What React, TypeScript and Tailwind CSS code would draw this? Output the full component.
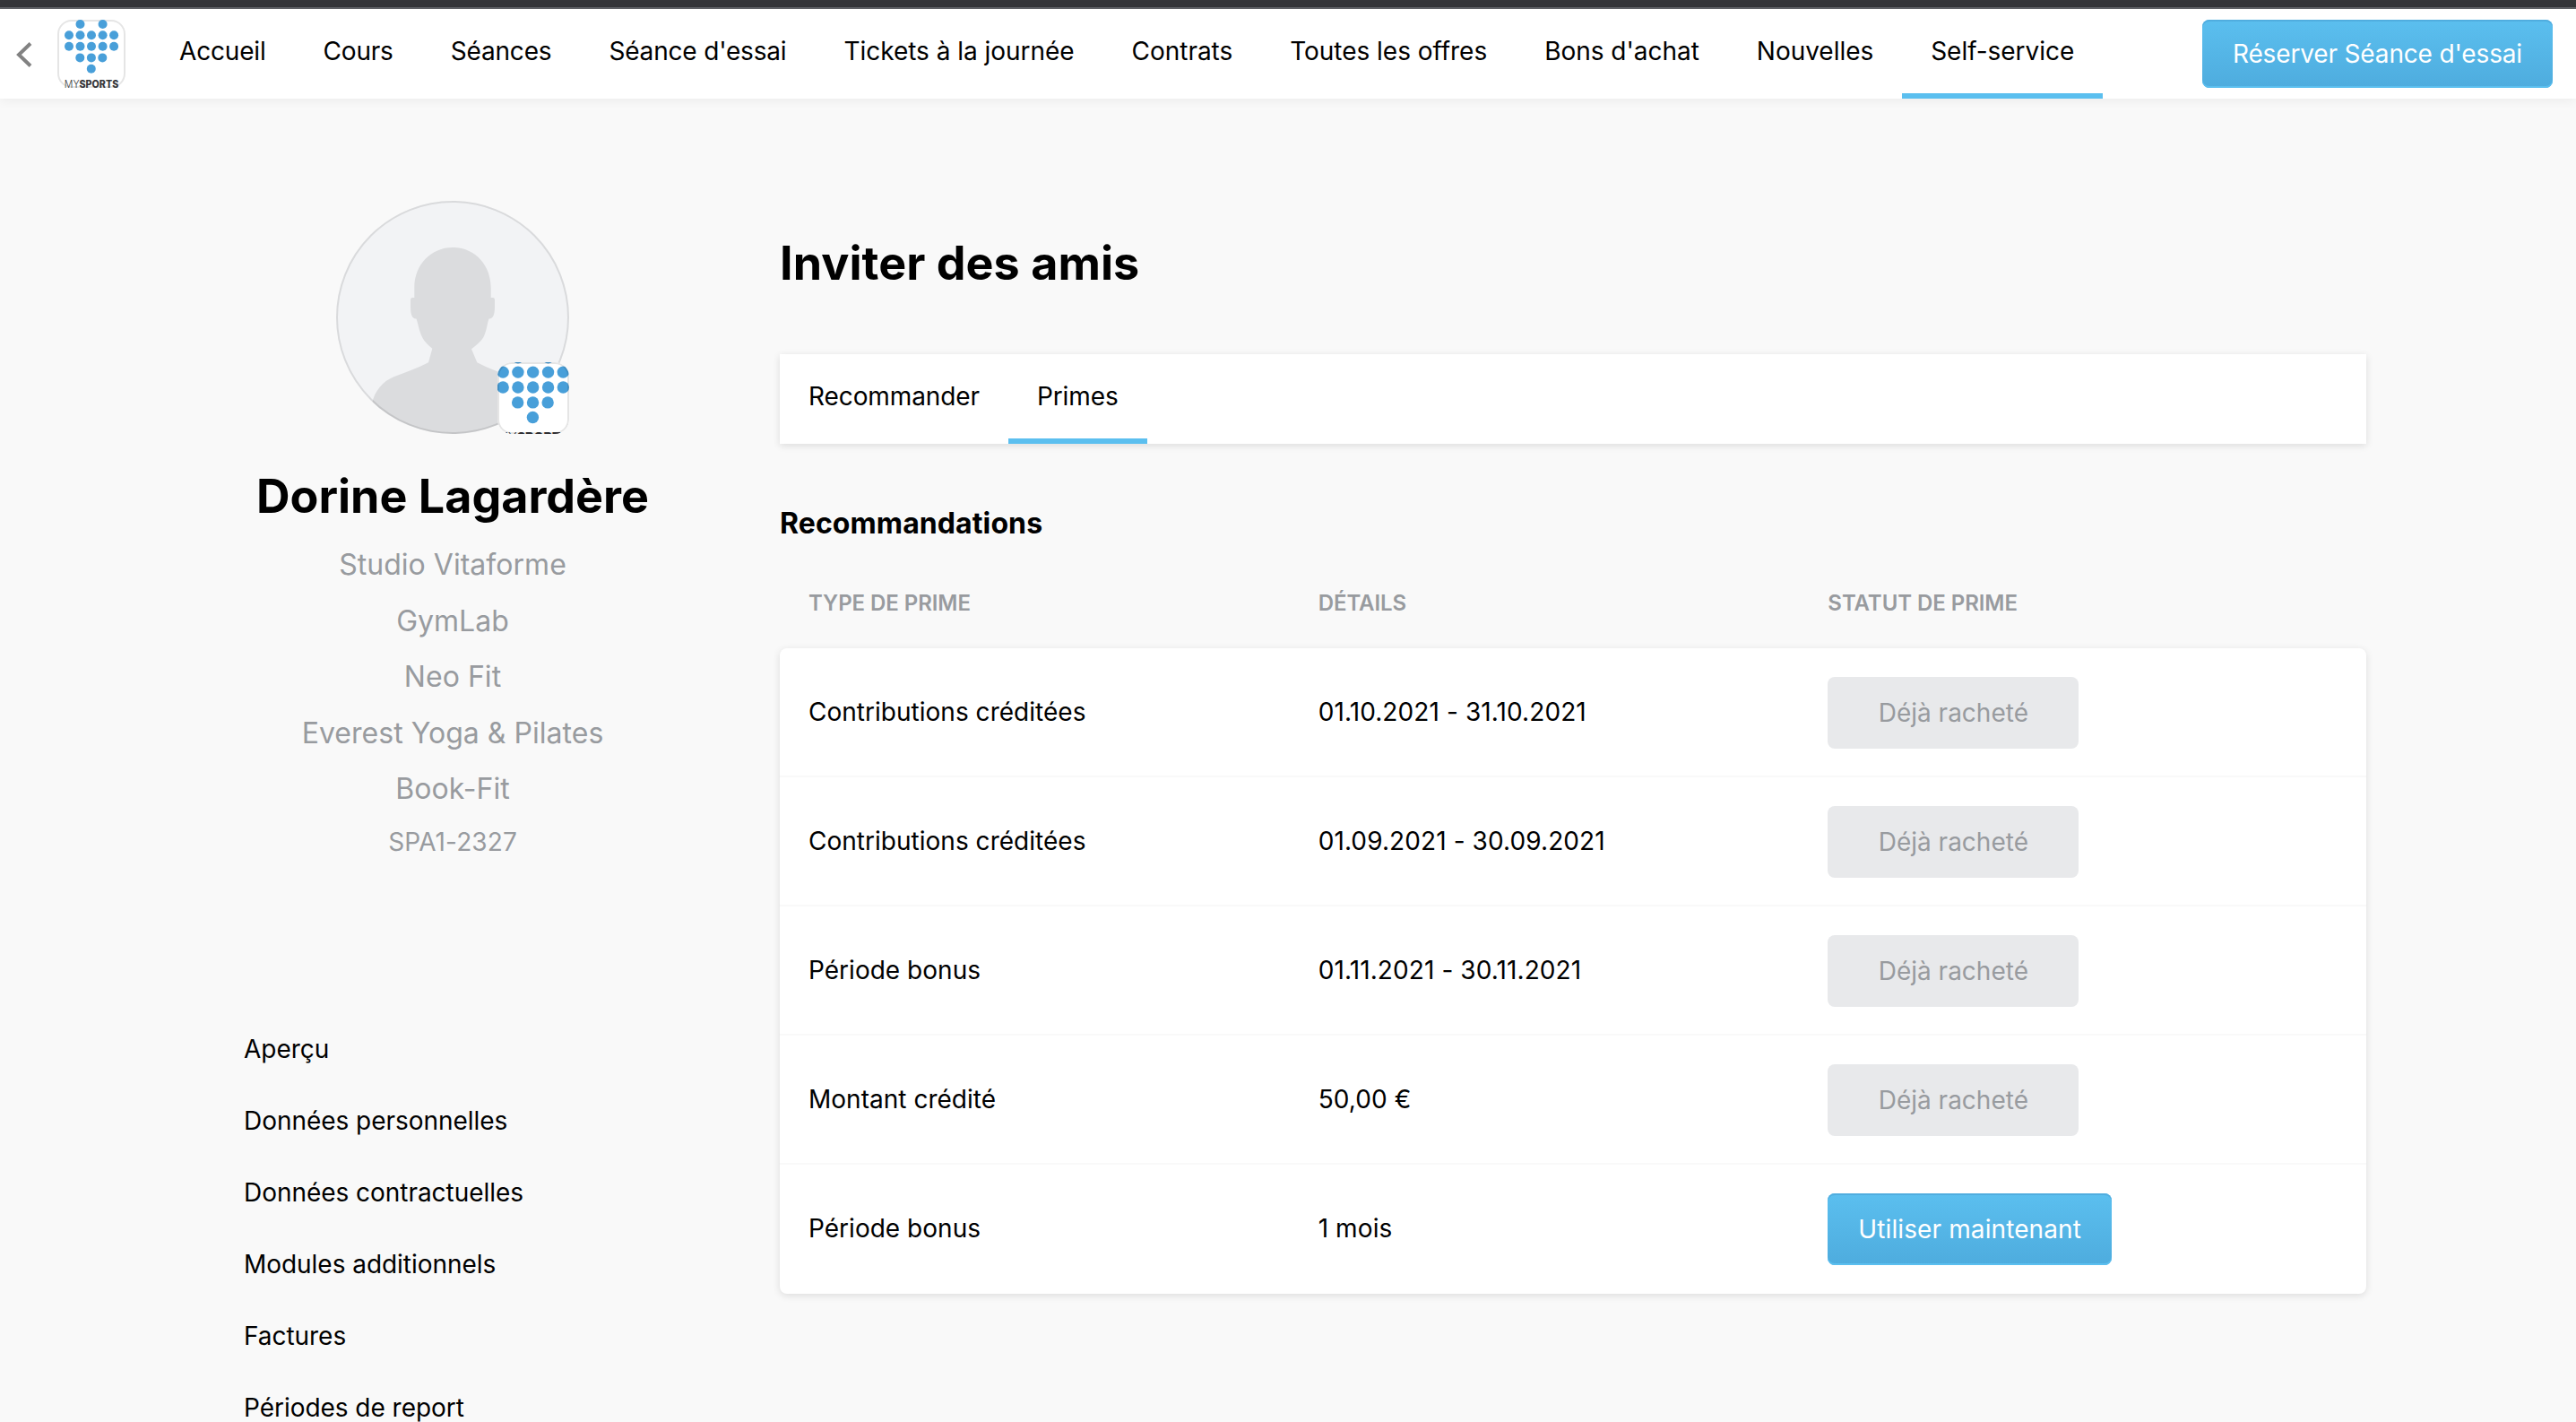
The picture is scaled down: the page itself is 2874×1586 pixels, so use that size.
const navItems = [
    "Accueil",
    "Cours",
    "Séances",
    "Séance d'essai",
    "Tickets à la journée",
    "Contrats",
    "Toutes les offres",
    "Bons d'achat",
    "Nouvelles",
    "Self-service",
];

const studios = ["Studio Vitaforme", "GymLab", "Neo Fit", "Everest Yoga & Pilates", "Book-Fit"];

const menuItems = [
    "Aperçu",
    "Données personnelles",
    "Données contractuelles",
    "Modules additionnels",
    "Factures",
    "Périodes de report",
];

const rewards = [
    { type: "Contributions créditées", details: "01.10.2021 - 31.10.2021", redeemed: true },
    { type: "Contributions créditées", details: "01.09.2021 - 30.09.2021", redeemed: true },
    { type: "Période bonus", details: "01.11.2021 - 30.11.2021", redeemed: true },
    { type: "Montant crédité", details: "50,00 €", redeemed: true },
    { type: "Période bonus", details: "1 mois", redeemed: false },
];

// columns of the dot heart, row by row
const dotRows = [
    { y: 5, cols: [25.5, 50.6] },
    { y: 17.2, cols: [13, 25.5, 38, 50.6, 63.1] },
    { y: 29.8, cols: [13, 25.5, 38, 50.6, 63.1] },
    { y: 42.4, cols: [25.3, 37.9, 50.3] },
    { y: 54.8, cols: [37.8] },
];

const LogoMark = ({ viewBox, className }: { viewBox: string; className: string }) => {
    return <svg viewBox={viewBox} className={`relative w-full h-full ${className}`}>
        {dotRows.map((row) => row.cols.map((x) => (
            <circle key={`${row.y}-${x}`} cx={x} cy={row.y} r="5" fill="#489fd9" />
        )))}
        <text x="7.8" y="75.5" fontSize="11.3" fontFamily="Inter" fill="#35363a" textLength="60.4" lengthAdjust="spacingAndGlyphs">
            <tspan fontWeight="300">MY</tspan>
            <tspan fontWeight="800">SPORTS</tspan>
        </text>
    </svg>
}

const Avatar = () => {
    return <div className="relative w-[260px] h-[260px]">
        <div className="w-full h-full rounded-full overflow-hidden bg-[#f2f3f5]">
            <svg viewBox="0 0 260 260" className="w-full h-full" fill="#dbdcde">
                <path d="M130 52C106 52 87.3 71 87.3 97V108H85Q83 108 83 111V118C83 127 85 132 89.5 131.5C91.5 137 92.5 145 96 152C98.5 157 103 161.5 107.3 164.7L103 180.3C91 186.5 77 191.5 65 196C52 201 43 212 40 226L40 260H220V226C217 212 208 201 195 196C183 191.5 169 186.5 157.3 180.3L151 165.3C156 161.5 161.5 157 164.5 152C168 145 168.5 137 170.5 131.5C175 132 177 127 177 118V111Q177 108 175 108H172.7V97C172.7 71 154 52 130 52Z" />
            </svg>
        </div>
        <div className="absolute inset-0 rounded-full border-2 border-black/10"></div>
        <div className="absolute right-0 bottom-0 w-20 h-20 bg-white rounded-2xl overflow-hidden">
            <LogoMark viewBox="8.4 8.9 59.7 59.7" className="overflow-hidden" />
            <div className="absolute inset-0 rounded-2xl border-2 border-black/10"></div>
        </div>
    </div>
}

const primaryButton = "rounded-lg px-8.5 text-white whitespace-nowrap bg-linear-to-b from-[#5bbfef] to-[#4eacde] shadow-[inset_0_2px_0_#50addf,inset_0_-2px_0_#5bbfef]";

const Header = () => {
    return <div className="relative border-t-2 border-[#5f6166] bg-white h-[102px] flex items-center pl-[18px] pr-[26px] shadow-[0_2px_12px_rgba(0,0,0,0.06)]">
        <svg width="18" height="28" viewBox="0 0 18 28" fill="none" stroke="#828282" strokeWidth="4" className="shrink-0 mt-0.5">
            <path d="M16 1.5L3 14L16 26.5" />
        </svg>
        <div className="relative shrink-0 w-[76px] h-[76px] ml-7 bg-white rounded-2xl">
            <div className="absolute inset-0 rounded-2xl border-2 border-black/10"></div>
            <LogoMark viewBox="0 0 76 76" className="overflow-visible" />
        </div>
        <div className="flex h-full ml-7">
            {navItems.map((item, i) => (
                <div key={item} className={`h-full px-8 flex items-center border-b-[6px] whitespace-nowrap ${i < 4 ? "tracking-[-0.18px]" : "tracking-[-0.03px]"} ${item === "Self-service" ? "border-[#5bbfef]" : "border-transparent"}`}>
                    {item}
                </div>
            ))}
        </div>
        <button className={`ml-auto h-[76px] tracking-[-0.15px] ${primaryButton}`}>Réserver Séance d'essai</button>
    </div>
}

const Sidebar = () => {
    return <div className="w-[466px] shrink-0 ml-[272px] pt-[114px]">
        <div className="flex flex-col items-center text-[#989b9f]">
            <Avatar />
            <div className="mt-[39px] text-[52px] leading-[62px] font-bold text-black whitespace-nowrap">Dorine Lagardère</div>
            <div className="mt-3.5 text-[32px] leading-[62.5px] text-center tracking-[0.03px]">
                {studios.map((studio) => <div key={studio}>{studio}</div>)}
            </div>
            <div className="leading-[54px] tracking-[0.1px]">SPA1-2327</div>
        </div>
        <div className="mt-[164px]">
            {menuItems.map((item) => (
                <div key={item} className="h-20 leading-20 tracking-[-0.04px] whitespace-nowrap">{item}</div>
            ))}
        </div>
    </div>
}

const Main = () => {
    return <div className="w-[1770px] ml-[132px] pt-[153px]">
        <div className="text-[52px] leading-[62px] font-bold tracking-[0.05px]">Inviter des amis</div>

        <div className="mt-[70px] h-[100px] bg-white flex tracking-[-0.1px] shadow-[0_2px_8px_rgba(0,0,0,0.12)]">
            <div className="h-full px-8 flex items-center border-b-[6px] border-transparent">Recommander</div>
            <div className="h-full px-8 flex items-center border-b-[6px] border-[#5bbfef]">Primes</div>
        </div>

        <div className="mt-[69px] text-[32px] leading-10 font-bold tracking-[0.1px]">Recommandations</div>

        <div className="mt-[53px] px-8 grid grid-cols-3 text-2xl leading-8 font-semibold tracking-[-0.06px] text-[#989b9f]">
            <div>TYPE DE PRIME</div>
            <div>DÉTAILS</div>
            <div>STATUT DE PRIME</div>
        </div>

        <div className="mt-[34px] bg-white rounded-lg shadow-[0_2px_8px_rgba(0,0,0,0.12)]">
            {rewards.map((reward, i) => (
                <div key={i} className="h-36 px-8 grid grid-cols-3 items-center not-last:shadow-[inset_0_-2px_0_#f9f9f9]">
                    <div className="pb-0.5 tracking-[0.02px]">{reward.type}</div>
                    <div className="pb-0.5 tracking-[0.1px]">{reward.details}</div>
                    <div>
                        {reward.redeemed
                            ? <button className="h-20 w-70 rounded-lg bg-[#e8e9eb] text-[#989b9f]">Déjà racheté</button>
                            : <button className={`h-20 tracking-[0.11px] ${primaryButton}`}>Utiliser maintenant</button>}
                    </div>
                </div>
            ))}
        </div>
    </div>
}

export default function App() {
    return <div className="h-[1586px] overflow-hidden bg-[#f9f9f9] font-[Inter,sans-serif] text-[28px] text-black">
        <div className="h-2 bg-[#35363a]"></div>
        <Header />
        <div className="flex">
            <Sidebar />
            <Main />
        </div>
    </div>
}
